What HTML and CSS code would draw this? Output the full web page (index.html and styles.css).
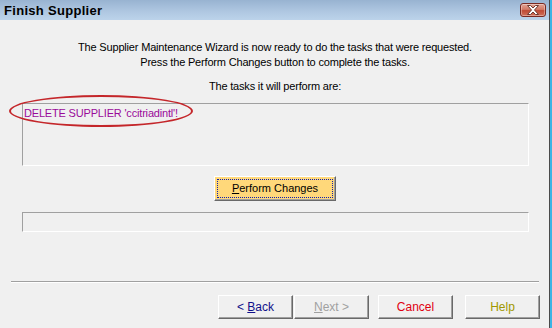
FILE: index.html
```html
<!DOCTYPE html>
<html lang="en">
<head>
    <meta charset="UTF-8">
    <title>Finish Supplier</title>
    <link rel="stylesheet" href="styles.css">
</head>
<body>
    <div class="window">
        <div class="titlebar">
            <span class="title">Finish Supplier</span>
            <button class="close-btn" aria-label="Close">
                <svg width="14" height="10" viewBox="0 0 14 10">
                    <path d="M1.5 0.5 L4.5 0.5 L7 3 L9.5 0.5 L12.5 0.5 L8.5 5 L12.5 9.5 L9.5 9.5 L7 7 L4.5 9.5 L1.5 9.5 L5.5 5 Z" fill="#fff" stroke="#6b3a32" stroke-width="1"/>
                </svg>
            </button>
        </div>

        <div class="content">
            <p class="intro">
                The Supplier Maintenance Wizard is now ready to do the tasks that were requested.<br>
                Press the Perform Changes button to complete the tasks.
            </p>
            <p class="label">The tasks it will perform are:</p>

            <div class="task-box">
                <span class="task">DELETE SUPPLIER 'ccitriadintl'!</span>
            </div>

            <div class="action-row">
                <button class="perform-btn"><span class="focus-rect"><u>P</u>erform Changes</span></button>
            </div>

            <div class="progress-box"></div>

            <div class="separator"></div>

            <div class="nav">
                <div class="nav-pair">
                    <button class="nav-btn back">&lt; <u>B</u>ack</button>
                    <button class="nav-btn next" disabled><u>N</u>ext &gt;</button>
                </div>
                <button class="nav-btn cancel">Cancel</button>
                <button class="nav-btn help">Help</button>
            </div>
        </div>

        <!-- red marker drawn over the task line -->
        <div class="marker"></div>
    </div>
</body>
</html>
```

FILE: styles.css
```css
* {
    box-sizing: border-box;
    margin: 0;
    padding: 0;
}

html {
    background: #3cb4e4;
}

body {
    width: 552px;
    height: 328px;
    font-family: 'Liberation Sans', Arial, sans-serif;
    font-size: 11px;
    letter-spacing: -0.18px;
    color: #000;
    overflow: hidden;
}

.window {
    position: relative;
    width: 550px;
    height: 328px;
    background: #f0f0f0;
    border-right: 1px solid #4a4a4a;
}

.titlebar {
    height: 20px;
    display: flex;
    align-items: center;
    justify-content: space-between;
    padding: 0 3px 0 4px;
    background: linear-gradient(to bottom, #98b3d1 0%, #b0c8e2 60%, #bcd3ea 100%);
}

.title {
    font-weight: bold;
    font-size: 13px;
    letter-spacing: 0.3px;
}

.close-btn {
    width: 26px;
    height: 14px;
    display: flex;
    align-items: center;
    justify-content: center;
    border: 1px solid #7a2a22;
    border-radius: 3px;
    background: linear-gradient(to bottom, #e3a597 0%, #d27a66 45%, #bf4a34 55%, #d0705a 100%);
    box-shadow: inset 0 0 0 1px rgba(255, 255, 255, 0.35);
}

.content {
    padding: 20px 10px 0 11px;
}

.intro {
    text-align: center;
    line-height: 15px;
}

.label {
    text-align: center;
    line-height: 15px;
    margin-top: 9px;
}

.task-box {
    height: 63px;
    margin: 9px 0 0 11px;
    width: 507px;
    padding: 3px 1px;
    border-top: 1px solid #a0a0a0;
    border-left: 1px solid #a0a0a0;
    border-bottom: 1px solid #fff;
    border-right: 1px solid #fff;
    line-height: 13px;
}

.task {
    color: #9a0a9a;
}

.action-row {
    display: flex;
    justify-content: center;
    margin-top: 10px;
    width: 528px;
}

.perform-btn {
    width: 122px;
    height: 25px;
    padding: 2px;
    font: inherit;
    color: #000;
    background: #ffd87a;
    border: 1px solid;
    border-color: #fff #696969 #696969 #fff;
    box-shadow: inset -1px -1px #a0a0a0;
}

.focus-rect {
    display: block;
    height: 100%;
    line-height: 17px;
    border: 1px dotted #1020b0;
}

.progress-box {
    height: 20px;
    margin: 11px 0 0 11px;
    width: 507px;
    border-top: 1px solid #a0a0a0;
    border-left: 1px solid #a0a0a0;
    border-bottom: 1px solid #fff;
    border-right: 1px solid #fff;
}

.separator {
    margin-top: 49px;
    width: 528px;
    border-top: 1px solid #a0a0a0;
    border-bottom: 1px solid #fff;
}

.nav {
    display: flex;
    justify-content: flex-end;
    gap: 12px;
    margin: 12px -1px 0 0;
}

.nav-pair {
    display: flex;
    gap: 1px;
    margin-right: -3px;
}

.nav-btn {
    width: 75px;
    height: 24px;
    font: inherit;
    font-size: 12px;
    background: #f0f0f0;
    border: 1px solid;
    border-color: #fff #696969 #696969 #fff;
    box-shadow: inset -1px -1px #a0a0a0;
}

.back {
    color: #10108a;
}

.next {
    color: #a0a0a0;
}

.cancel {
    color: #e00010;
}

.help {
    color: #a09800;
}

.marker {
    position: absolute;
    left: 9px;
    top: 95px;
    width: 184px;
    height: 32px;
    border: 2px solid #c4262a;
    border-radius: 50%;
}
```
